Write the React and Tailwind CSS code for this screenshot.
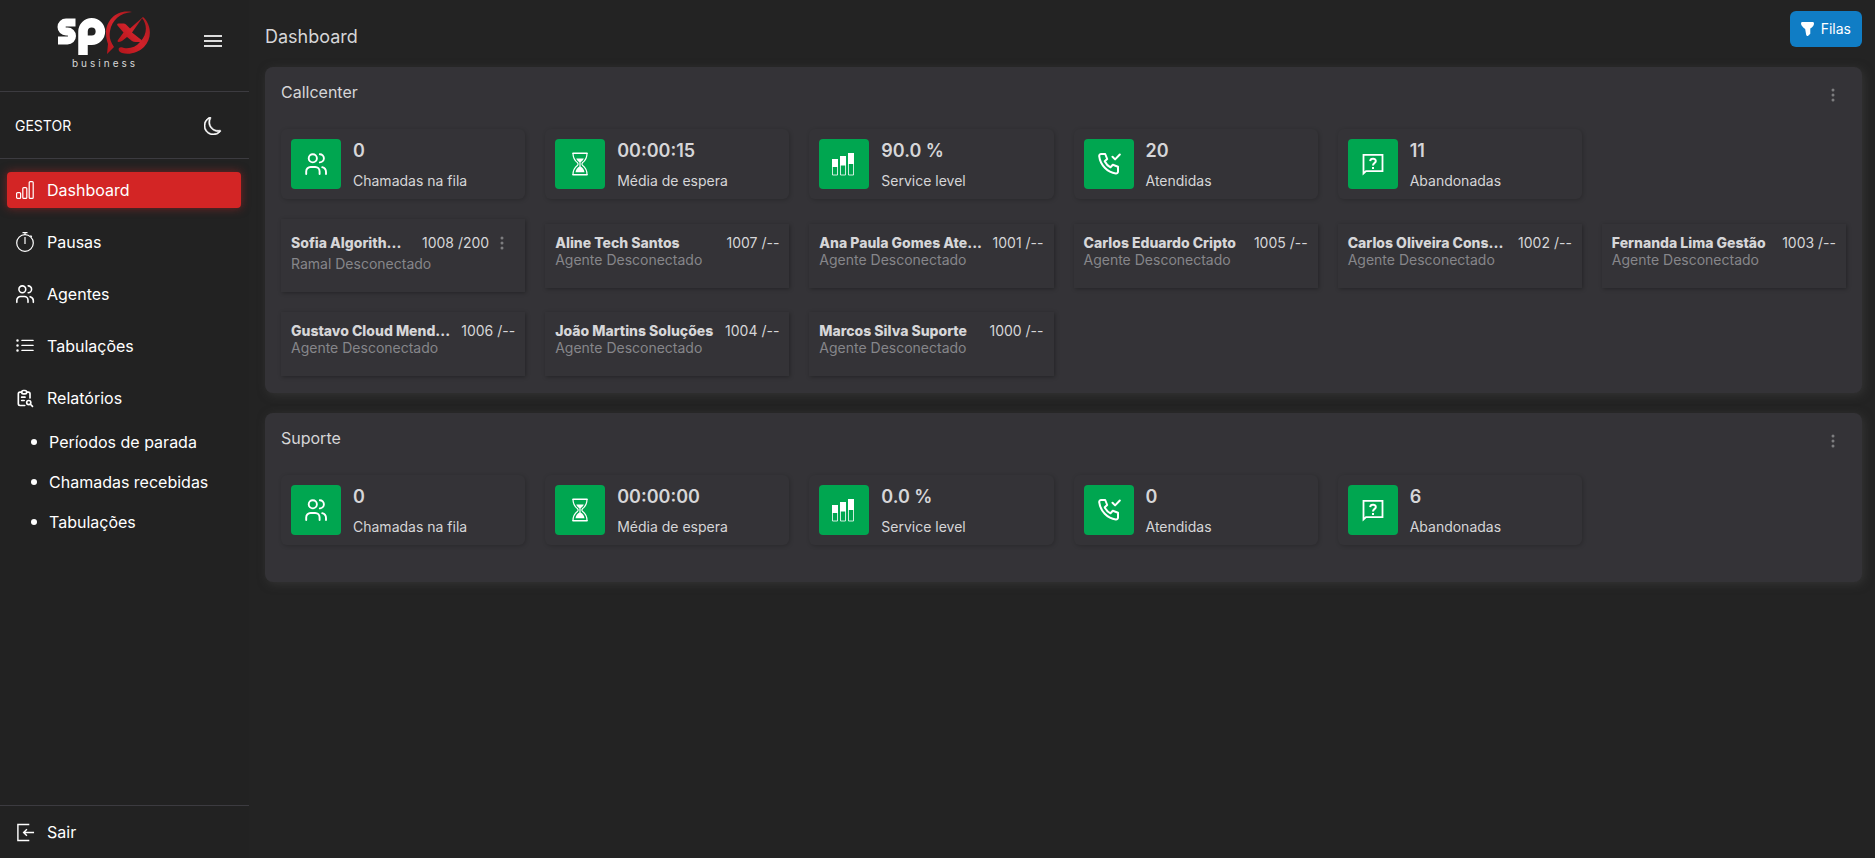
import React, { useState } from 'react'
import { BsListUl, BsMoon } from 'react-icons/bs'
import { TbReportSearch } from 'react-icons/tb'

const stats = [
    { key: 'queue', label: 'Chamadas na fila', icon: UsersIcon },
    { key: 'wait', label: 'Média de espera', icon: HourglassIcon },
    { key: 'level', label: 'Service level', icon: LevelIcon },
    { key: 'answered', label: 'Atendidas', icon: PhoneCheckIcon },
    { key: 'abandoned', label: 'Abandonadas', icon: QuestionIcon },
]

const queues = [
    {
        name: 'Callcenter',
        values: { queue: '0', wait: '00:00:15', level: '90.0 %', answered: '20', abandoned: '11' },
        agents: [
            { name: 'Sofia Algorith...', ext: '1008 /200', status: 'Ramal Desconectado', menu: true },
            { name: 'Aline Tech Santos', ext: '1007 /--', status: 'Agente Desconectado' },
            { name: 'Ana Paula Gomes Ate...', ext: '1001 /--', status: 'Agente Desconectado' },
            { name: 'Carlos Eduardo Cripto', ext: '1005 /--', status: 'Agente Desconectado' },
            { name: 'Carlos Oliveira Cons...', ext: '1002 /--', status: 'Agente Desconectado' },
            { name: 'Fernanda Lima Gestão', ext: '1003 /--', status: 'Agente Desconectado' },
            { name: 'Gustavo Cloud Mend...', ext: '1006 /--', status: 'Agente Desconectado' },
            { name: 'João Martins Soluções', ext: '1004 /--', status: 'Agente Desconectado' },
            { name: 'Marcos Silva Suporte', ext: '1000 /--', status: 'Agente Desconectado' },
        ],
    },
    {
        name: 'Suporte',
        values: { queue: '0', wait: '00:00:00', level: '0.0 %', answered: '0', abandoned: '6' },
        agents: [],
    },
]

const menu = [
    { name: 'Dashboard', icon: BarsIcon },
    { name: 'Pausas', icon: StopwatchIcon },
    { name: 'Agentes', icon: UsersIcon },
    { name: 'Tabulações', icon: BsListUl },
    { name: 'Relatórios', icon: TbReportSearch },
]

const reports = ['Períodos de parada', 'Chamadas recebidas', 'Tabulações']

function BarsIcon({ className }) {
    return (
        <svg viewBox="0 0 20 20" className={className} fill="none" stroke="currentColor" strokeWidth="1.2">
            <rect x="1.600" y="12.600" width="4" height="5.800" rx="1" />
            <rect x="7.800" y="7.600" width="4" height="10.800" rx="1" />
            <rect x="14.200" y="1.600" width="4" height="16.800" rx="1" />
        </svg>
    )
}

function StopwatchIcon({ className }) {
    return (
        <svg viewBox="0 0 20 20" className={className} fill="none" stroke="currentColor" strokeWidth="1.2">
            <circle cx="10" cy="11" r="8.300" />
            <path d="M7.500 .7h5M10 .7v2M10 5v7M15.500 3.500l1.300 1.300" />
        </svg>
    )
}

function UsersIcon({ className }) {
    return (
        <svg viewBox="0 0 24 24" className={className} fill="none" stroke="currentColor" strokeWidth="1.9" strokeLinecap="round">
            <circle cx="8.8" cy="6.3" r="4.1" />
            <path d="M15.8 2.2a4.1 4.1 0 0 1 0 8.2" />
            <path d="M2.2 22v-2.6a4.4 4.4 0 0 1 4.4-4.4h4.6a4.4 4.4 0 0 1 4.4 4.4V22" />
            <path d="M18.2 15.2c2.4.7 3.8 2.4 3.8 4.8v2" />
        </svg>
    )
}

function HourglassIcon({ className }) {
    return (
        <svg viewBox="0 0 24 24" className={className} fill="none" stroke="currentColor" strokeWidth="1.2">
            <path d="M5 1.200h14M5 22.800h14" strokeWidth="1.600" strokeLinecap="round" />
            <path d="M5 1.500c0 5 1.500 7 4.600 9.300q1 1.200 0 2.400C6.500 15.500 5 17.500 5 22.500h14c0-5-1.500-7-4.600-9.300q-1-1.200 0-2.400C17.500 8.500 19 6.500 19 1.500z" />
            <path d="M8.200 6.500h7.600c-.8 1.800-2 2.800-3.200 3.800v4.200c2.200 1.400 3.400 3 3.900 5.700h-9c.5-2.700 1.700-4.300 3.900-5.700v-4.200C10.200 9.300 9 8.300 8.200 6.500z" fill="currentColor" stroke="none" />
        </svg>
    )
}

function LevelIcon({ className }) {
    return (
        <svg viewBox="0 0 24 24" className={className} fill="none" stroke="currentColor" strokeWidth="1">
            <path d="M.5 7.500h5V23h-5zM8.500 4.500h5V23h-5zM16.500 1.500h5V23h-5z" strokeOpacity="0.8" />
            <path d="M0 7h6v8H0zM8 4h6v9.500H8zM16 1h6v11h-6z" fill="currentColor" stroke="none" />
        </svg>
    )
}

function PhoneCheckIcon({ className }) {
    return (
        <svg viewBox="0 0 24 24" className={className} fill="none" stroke="currentColor" strokeWidth="2" strokeLinecap="round" strokeLinejoin="round">
            <path d="M21 17v2.500a2 2 0 0 1-2.200 2C10.500 20.500 3.200 13 2.200 4.200A2 2 0 0 1 4.200 2H8.200l2 5-2.500 2.300a13 13 0 0 0 5.800 6l2.300-2.500 5.200 2z" />
            <path d="M15.500 4.800l2.600 2.600L22.800 2.500" />
        </svg>
    )
}

function QuestionIcon({ className }) {
    return (
        <svg viewBox="0 0 24 24" className={className} fill="none" stroke="currentColor" strokeWidth="1.8">
            <path d="M2.500 21.500V2.900h19v16.200H5z" />
            <path d="M9.200 9.100c.1-3.300 5.700-3.200 5.600 0 0 1.900-2.800 2.100-2.800 4.400" strokeWidth="2" />
            <path d="M11 15h2v2h-2z" fill="currentColor" stroke="none" />
        </svg>
    )
}

function DotsIcon() {
    return (
        <svg viewBox="0 0 4 14" className="h-[14px] w-1" fill="currentColor">
            <circle cx="2" cy="2" r="1.500" />
            <circle cx="2" cy="7" r="1.500" />
            <circle cx="2" cy="12" r="1.500" />
        </svg>
    )
}

function ExitIcon({ className }) {
    return (
        <svg viewBox="0 0 20 20" className={className} fill="none" stroke="currentColor" strokeWidth="1.500">
            <path d="M14 1.500H2v17h12M19 10H8M11.500 6.500L8 10l3.500 3.500" />
        </svg>
    )
}

function Logo() {
    return (
        <svg viewBox="0 0 94 60" className="h-[60px] w-[94px]" role="img" aria-label="spx business">
            <defs>
                <linearGradient id="red" x1="0" y1="1" x2="1" y2="0">
                    <stop offset="0" stopColor="#b3151b" />
                    <stop offset="0.5" stopColor="#d0222a" />
                    <stop offset="1" stopColor="#a8181d" />
                </linearGradient>
            </defs>
            {/* rounded letter shapes of the wordmark */}
            <g fill="none" stroke="#fff">
                <path d="M18.500 12.500H9a4.500 4.500 0 0 0 0 9h1.500a4.500 4.500 0 0 1 0 9H1" strokeWidth="8" />
                <path d="M26 45V21.500a8.700 8.700 0 1 1 8.700 8.700H30" strokeWidth="9.500" />
            </g>
            <g fill="url(#red)">
                <path d="M75 2C60-1 49 10 49 23c0 5 1 8 2 11l-1 10 7-7c-4-6-5-10-4-16C55 10 63 3 75 2z" />
                <path d="M86 7c9 8 9 22 1 30-6 6-15 8-22 6-3-1-4-3-3-5 1-1 3-1 5 0 6 1 12-1 16-6 8-8 7-18 2-24z" />
                <path d="M86 7L75 22.500l9.500 7.500q1 2-1 2h-5q-2 0-3.500-1l-5-4-5 4q-2 1-4 1-1-1 0-2l5.500-7.500-6-7q-1-2 1-2h5q1.500 0 2.500 1l4 4z" />
            </g>
            <text x="15" y="57" fill="#d8d8d8" fontSize="10" letterSpacing="3" fontFamily="Inter, sans-serif">business</text>
        </svg>
    )
}

function Sidebar({ active, onSelect }) {
    return (
        <aside className="flex w-[249px] shrink-0 flex-col bg-[#222222] text-white">
            <div className="flex h-[92px] items-start justify-between border-b border-[#3c3b40] pt-[10px] pr-[27px] pl-[57px]">
                <Logo />
                <button aria-label="Menu" className="mt-[22px] flex h-[18px] w-[18px] flex-col justify-between py-[3px]">
                    <span className="h-[2px] w-full bg-[#dddddd]" />
                    <span className="h-[2px] w-full bg-[#dddddd]" />
                    <span className="h-[2px] w-full bg-[#dddddd]" />
                </button>
            </div>
            <div className="flex h-[67px] items-center justify-between border-b border-[#3c3b40] pt-[2px] pr-[27px] pl-[15px]">
                <span className="text-sm">GESTOR</span>
                <button aria-label="Tema escuro"><BsMoon className="size-[18px] stroke-[0.5]" /></button>
            </div>
            <nav className="flex flex-col gap-4 pt-[13px] pr-2 pl-[7px] text-base">
                {menu.map(({ name, icon: Icon }) => (
                    <a
                        key={name}
                        href="#"
                        onClick={() => onSelect(name)}
                        className={
                            active === name
                                ? 'flex h-9 items-center gap-3 rounded bg-[#d32525] px-2 shadow-[0_0_10px_rgba(211,37,37,0.5)]'
                                : 'flex h-9 items-center gap-3 rounded px-2'
                        }
                    >
                        <Icon className="size-5" />
                        {name}
                    </a>
                ))}
            </nav>
            <ul className="mt-[6px] flex flex-col text-base">
                {reports.map(name => (
                    <li key={name}>
                        <a href="#" className="flex h-10 items-center gap-3 pl-[31px]">
                            <span className="size-[6px] rounded-full bg-white" />
                            {name}
                        </a>
                    </li>
                ))}
            </ul>
            <div className="mt-auto border-t border-[#3c3b40]">
                <a href="#" className="flex h-[52px] items-center gap-3 pl-4 text-base">
                    <ExitIcon className="size-[19px]" />
                    Sair
                </a>
            </div>
        </aside>
    )
}

function StatCard({ icon: Icon, value, label }) {
    return (
        <div className="flex h-[70px] items-center gap-3 rounded-md p-[10px] shadow-[1px_1px_4px_rgba(0,0,0,0.2)]">
            <div className="flex size-[50px] shrink-0 items-center justify-center rounded bg-[#00a650] text-white">
                <Icon className="size-6" />
            </div>
            <div className="flex flex-col gap-2 pt-[2px]">
                <span className="text-lg leading-6 font-semibold">{value}</span>
                <span className="text-sm">{label}</span>
            </div>
        </div>
    )
}

function AgentCard({ agent }) {
    return (
        <div className="p-[10px] text-sm shadow-[1px_1px_4px_rgba(0,0,0,0.3)]">
            <div className={agent.menu ? 'flex h-[27px] items-center' : 'flex h-[18px] items-center'}>
                <div className="flex min-w-0 flex-1 justify-between">
                    <span className="font-extrabold whitespace-nowrap">{agent.name}</span>
                    <span className="shrink-0">{agent.ext}</span>
                </div>
                {agent.menu && (
                    <button aria-label="Opções do agente" className="flex w-[26px] justify-center text-[#7d7d7f]">
                        <DotsIcon />
                    </button>
                )}
            </div>
            <p className="h-[26px] leading-4 text-[#86868a]">{agent.status}</p>
        </div>
    )
}

function QueuePanel({ queue }) {
    return (
        <section className="rounded-lg bg-[#343337] px-4 pt-[13px] pb-[17px] shadow-[2px_2px_10px_rgba(70,70,70,0.5)]">
            <div className="mb-[25px] flex h-6 items-start justify-between">
                <h2 className="text-base">{queue.name}</h2>
                <button aria-label="Opções da fila" className="flex w-[26px] justify-center pt-2 text-[#7d7d7f]">
                    <DotsIcon />
                </button>
            </div>
            <div className="grid grid-cols-6 gap-5">
                {stats.map(s => (
                    <StatCard key={s.key} icon={s.icon} label={s.label} value={queue.values[s.key]} />
                ))}
            </div>
            <div className="mt-5 grid grid-cols-6 items-center gap-5">
                {queue.agents.map(agent => (
                    <AgentCard key={agent.ext} agent={agent} />
                ))}
            </div>
        </section>
    )
}

export default function App() {
    const [active, setActive] = useState('Dashboard')

    return (
        <div className="flex min-h-screen bg-[#232323] font-['Inter',sans-serif] text-[#d6d6d8]">
            <Sidebar active={active} onSelect={setActive} />
            <main className="min-w-0 flex-1 pr-[13px] pl-4">
                <header className="flex h-[67px] items-start justify-between pt-[11px]">
                    <h1 className="pt-3 text-lg">Dashboard</h1>
                    <button className="flex h-9 items-center gap-[7px] rounded-md bg-[#107dc5] px-[11px] text-sm text-white">
                        <svg viewBox="0 0 14 16" className="h-4 w-[13px]" fill="currentColor">
                            <path d="M1.500 .5h11q1.500 0 1.500 1.500c0 2-1.500 4-4 5.500V13l-2.500 2.500H6.500Q5.500 15 5.500 14L4.500 8C2 6 0 4 0 2Q0 .5 1.500 .5z" />
                        </svg>
                        Filas
                    </button>
                </header>
                <div className="flex flex-col gap-5">
                    {queues.map(queue => (
                        <QueuePanel key={queue.name} queue={queue} />
                    ))}
                </div>
            </main>
        </div>
    )
}
